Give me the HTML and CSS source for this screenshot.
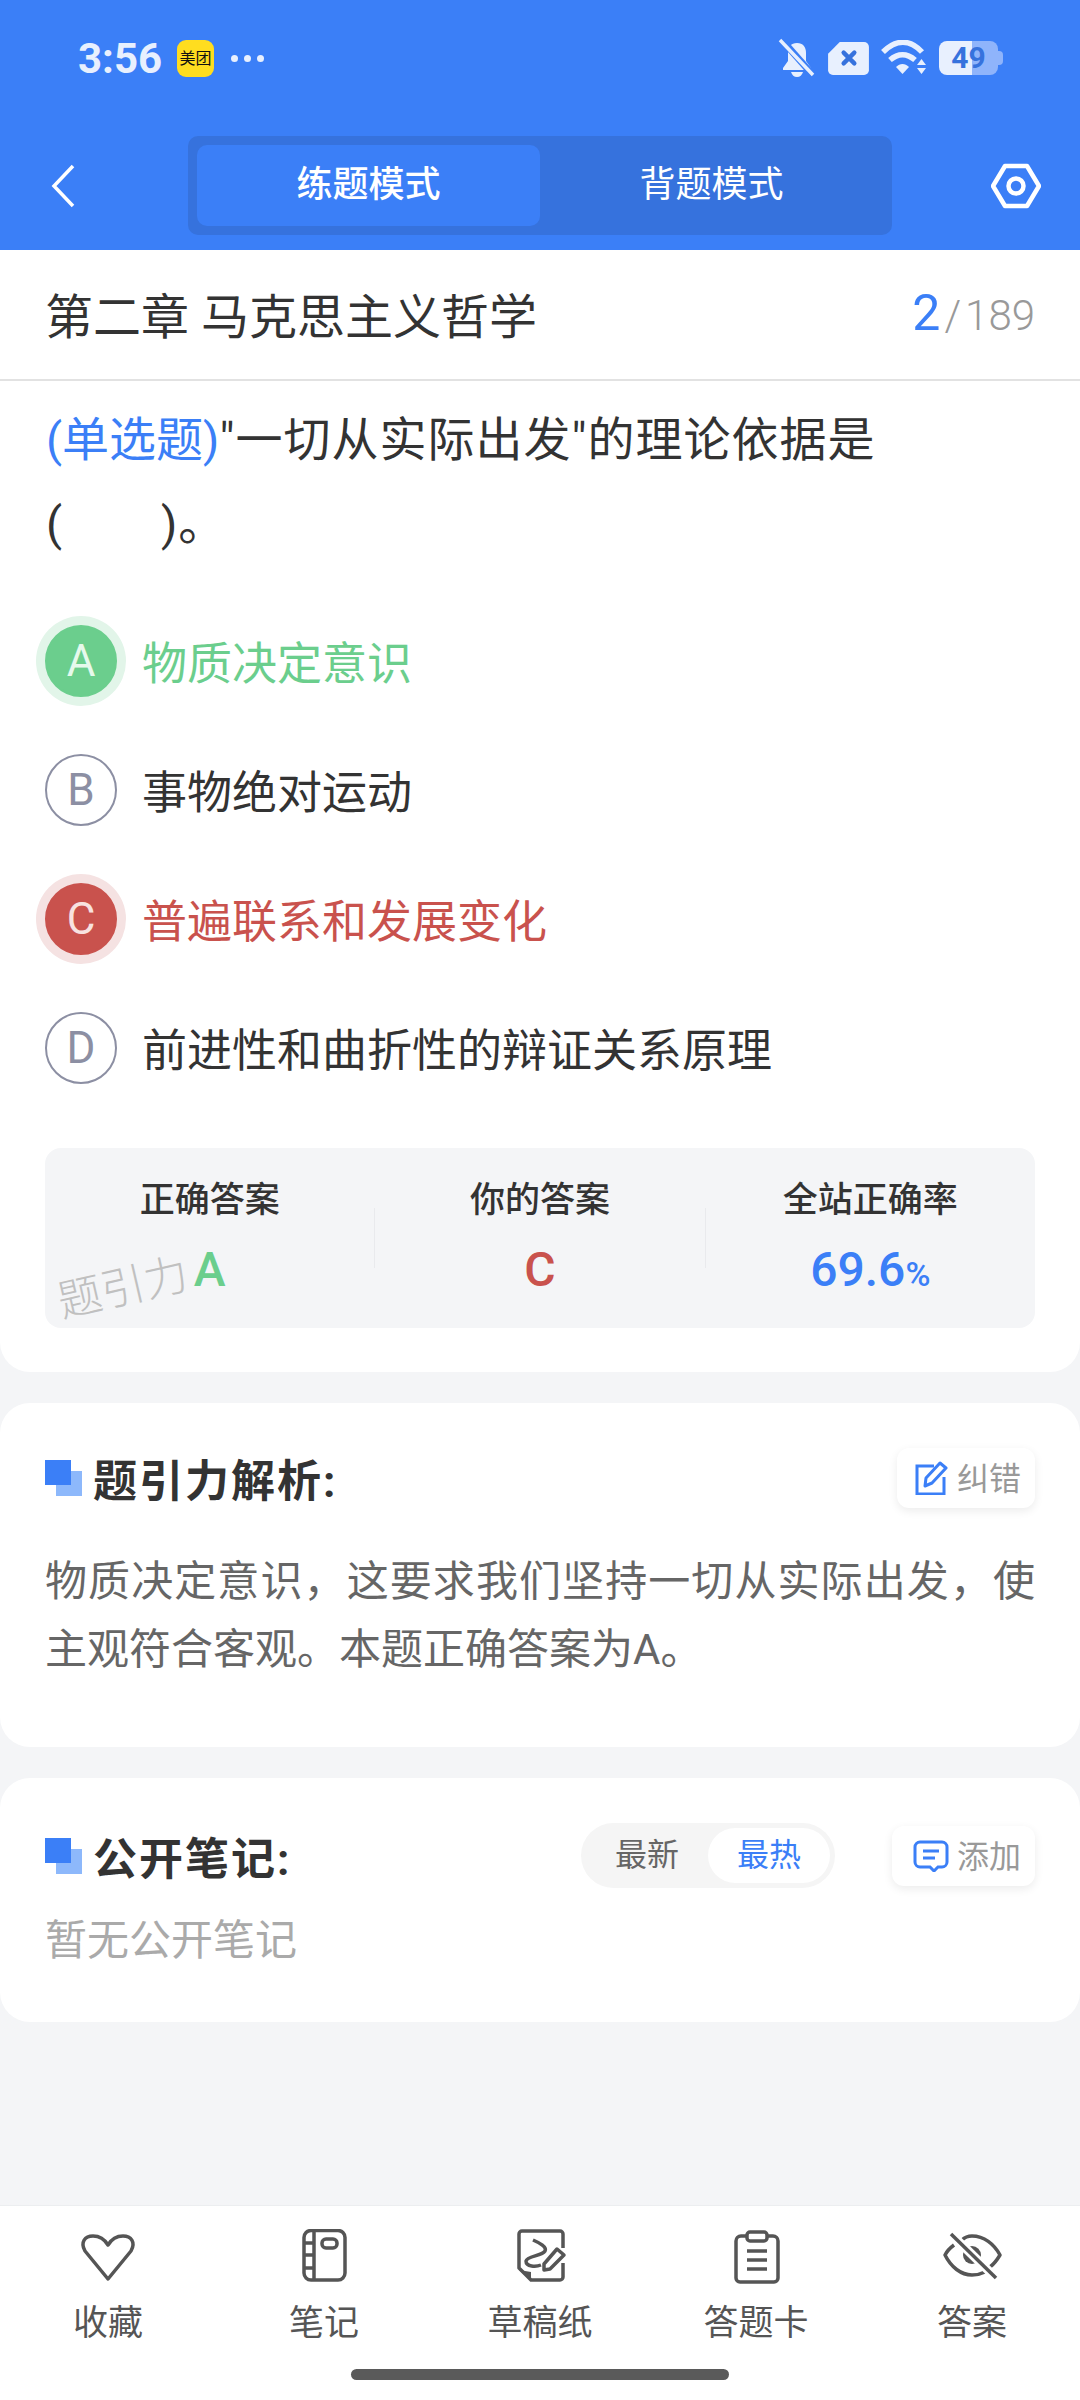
FILE: index.html
```html
<!DOCTYPE html>
<html lang="zh-CN">
<head>
  <meta charset="UTF-8">
  <title>练题模式</title>
  <link rel="stylesheet" href="styles.css">
</head>
<body>
<header class="header">
  <div class="status">
    <span class="time">3:56</span>
    <span class="app-badge">美团</span>
    <span class="more"><i></i><i></i><i></i></span>
    <span class="status-right">
      <svg width="38" height="40" viewBox="0 0 38 40">
        <path d="M19 5c-6 0-9 4-9 10v8l-5 7v2h28v-2l-5-7v-8c0-6-3-10-9-10z" fill="#e8f0fe"/>
        <path d="M13 34h12c-1 3-3 5-6 5s-5-2-6-5z" fill="#e8f0fe"/>
        <path d="M3 1l31 35" stroke="#3b7ff7" stroke-width="7"/>
        <path d="M2 2l33 35" stroke="#e8f0fe" stroke-width="3.5"/>
      </svg>
      <svg width="43" height="35" viewBox="0 0 44 36">
        <path d="M13 1h25a5 5 0 0 1 5 5v24a5 5 0 0 1-5 5H6a5 5 0 0 1-5-5V13z" fill="#e8f0fe"/>
        <path d="M17 12l11 11M28 12L17 23" stroke="#3672dd" stroke-width="4.5" stroke-linecap="round"/>
      </svg>
      <svg width="47" height="36" viewBox="0 0 47 36">
        <path d="M2 12c13-13 27-13 39 0" fill="none" stroke="#e8f0fe" stroke-width="5.5"/>
        <path d="M9 20c8-7 17-7 25 0" fill="none" stroke="#e8f0fe" stroke-width="5.5"/>
        <path d="M15 27c4-4 9-4 13 0l-6.500 7z" fill="#e8f0fe"/>
        <path d="M36 25l4.500-6 4.500 6zM36 28h9l-4.500 6z" fill="#e8f0fe"/>
      </svg>
      <span class="battery"><span class="battery-num">49</span></span>
    </span>
  </div>
  <nav class="nav">
    <div class="nav-side">
      <svg class="back" width="26" height="44" viewBox="0 0 26 44">
        <path d="M23 2L4 22l19 20" fill="none" stroke="#fff" stroke-width="3.500"/>
      </svg>
    </div>
    <div class="tabs">
      <div class="tab tab-on">练题模式</div>
      <div class="tab">背题模式</div>
    </div>
    <svg class="gear" width="50" height="46" viewBox="0 0 50 46">
      <path d="M14 3h22l12 20-12 20H14L2 23z" fill="none" stroke="#fff" stroke-width="4.500" stroke-linejoin="round"/>
      <circle cx="25" cy="23" r="7.500" fill="none" stroke="#fff" stroke-width="4.500"/>
    </svg>
  </nav>
</header>

<main class="main">
  <section class="card card-question">
    <div class="chapter">
      <span class="chapter-name">第二章 马克思主义哲学</span>
      <span class="count"><b>2</b><em>/</em>189</span>
    </div>
    <p class="question"><span class="qtype">(单选题)</span>"一切从实际出发"的理论依据是<br>(&emsp;&emsp;)。</p>
    <ul class="options">
      <li class="option right"><span class="letter">A</span>物质决定意识</li>
      <li class="option"><span class="letter">B</span>事物绝对运动</li>
      <li class="option wrong"><span class="letter">C</span>普遍联系和发展变化</li>
      <li class="option"><span class="letter">D</span>前进性和曲折性的辩证关系原理</li>
    </ul>
    <div class="stats">
      <div class="stat">
        <div class="stat-label">正确答案</div>
        <div class="stat-value green">A</div>
      </div>
      <div class="stat-sep"></div>
      <div class="stat">
        <div class="stat-label">你的答案</div>
        <div class="stat-value red">C</div>
      </div>
      <div class="stat-sep"></div>
      <div class="stat">
        <div class="stat-label">全站正确率</div>
        <div class="stat-value blue">69.6<small>%</small></div>
      </div>
      <div class="watermark">题引力</div>
    </div>
  </section>

  <section class="card card-analysis">
    <div class="card-head">
      <h2 class="title"><span class="marker"></span>题引力解析:</h2>
      <div class="mini-btn">
        <svg width="34" height="34" viewBox="0 0 34 34">
          <path d="M19 5H2v28h27V16" fill="none" stroke="#3b7ff7" stroke-width="3"/>
          <path d="M10 25l1-8L25 2l6 5-14 15z" fill="none" stroke="#3b7ff7" stroke-width="3" stroke-linejoin="round"/>
        </svg>
        <span>纠错</span>
      </div>
    </div>
    <p class="analysis">物质决定意识，这要求我们坚持一切从实际出发，使主观符合客观。本题正确答案为A。</p>
  </section>

  <section class="card card-notes">
    <div class="card-head notes-head">
      <h2 class="title"><span class="marker"></span>公开笔记:</h2>
      <div class="seg">
        <span class="seg-item">最新</span>
        <span class="seg-item seg-on">最热</span>
      </div>
      <div class="mini-btn">
        <svg width="36" height="32" viewBox="0 0 36 32">
          <path d="M7 2h22a5 5 0 0 1 5 5v15a5 5 0 0 1-5 5h-4l-4 4-4-4H7a5 5 0 0 1-5-5V7a5 5 0 0 1 5-5z" fill="none" stroke="#3b7ff7" stroke-width="3"/>
          <path d="M10 11h16M10 18h12" stroke="#3b7ff7" stroke-width="3"/>
        </svg>
        <span>添加</span>
      </div>
    </div>
    <p class="empty">暂无公开笔记</p>
  </section>
</main>

<footer class="footer">
  <div class="tools">
    <div class="tool">
      <svg width="60" height="56" viewBox="0 0 60 56"><path d="M30 50L7 22C2 13 7 7 15 7c7 0 12 4 15 9 3-5 8-9 15-9 8 0 13 6 8 15z"/></svg>
      <span>收藏</span>
    </div>
    <div class="tool">
      <svg width="60" height="56" viewBox="0 0 60 56">
        <rect x="10" y="1.500" width="41" height="49.500" rx="7"/>
        <path d="M20 1.500V51M10 14h10M10 26h10M10 39h10"/>
        <rect x="28" y="10" width="15" height="9" rx="4"/>
      </svg>
      <span>笔记</span>
    </div>
    <div class="tool">
      <svg width="60" height="56" viewBox="0 0 60 56">
        <path d="M53 19V5a3 3 0 0 0-3-3H12a3 3 0 0 0-3 3v34l12 12h29a3 3 0 0 0 3-3V34"/>
        <path class="solid" d="M9 41l12 2v8z"/>
        <path d="M23 11c7 3 14 7 12 11-3 5-18 5-19 10 0 6 10 6 15 4"/>
        <path d="M47 20l7 6-14 14-6 1v-6z"/>
      </svg>
      <span>草稿纸</span>
    </div>
    <div class="tool">
      <svg width="60" height="56" viewBox="0 0 60 56">
        <path d="M21 7h-6a5 5 0 0 0-5 5v37a4 4 0 0 0 4 4h34a4 4 0 0 0 4-4V12a5 5 0 0 0-5-5h-5"/>
        <rect x="21" y="3" width="20" height="9" rx="3"/>
        <path d="M21 22h20M21 31h20M21 40h20"/>
      </svg>
      <span>答题卡</span>
    </div>
    <div class="tool">
      <svg width="60" height="56" viewBox="0 0 60 56">
        <path d="M20 11c3-3 7-4 10-4 12 0 22 8 28 19-3 5-6 9-10 12"/>
        <path d="M12 16c-4 3-7 6-9 10 6 12 16 20 27 20 5 0 9-1 13-3"/>
        <circle class="solid" cx="30" cy="26" r="9"/>
        <path class="gap" d="M9 5l45 44"/>
        <path d="M9 5l45 44"/>
      </svg>
      <span>答案</span>
    </div>
  </div>
  <div class="home-bar"></div>
</footer>
</body>
</html>
```

FILE: styles.css
```css
* {
  box-sizing: border-box;
}
html, body {
  margin: 0;
  padding: 0;
}
body {
  width: 1080px;
  height: 2400px;
  display: flex;
  flex-direction: column;
  overflow: hidden;
  background: #f4f5f7;
  color: #333;
  font-family: Roboto, "Noto Sans CJK SC", sans-serif;
}
p, ul, h2 {
  margin: 0;
  padding: 0;
}

/* header */
.header {
  height: 250px;
  background: #3b7ff7;
  color: #fff;
}
.status {
  height: 116px;
  padding: 0 82px 0 78px;
  display: flex;
  align-items: center;
}
.time {
  width: 99px;
  font-size: 42px;
  font-weight: 700;
  color: #e8f0fe;
}
.app-badge {
  width: 37px;
  height: 37px;
  border-radius: 9px;
  background: #ffdd1f;
  color: #111;
  font-size: 16px;
  line-height: 37px;
  text-align: center;
  white-space: nowrap;
}
.more {
  display: flex;
  gap: 6px;
  margin-left: 17px;
}
.more i {
  width: 7px;
  height: 7px;
  border-radius: 50%;
  background: #e8f0fe;
}
.status-right {
  margin-left: auto;
  display: flex;
  align-items: center;
  gap: 11px;
}
.battery {
  position: relative;
  width: 59px;
  height: 34px;
  border-radius: 8px;
  background: linear-gradient(90deg, #e8f0fe 0 33px, #8fb4fb 33px);
  font-size: 30px;
  font-weight: 700;
  color: #3672dd;
  line-height: 34px;
  text-align: center;
}
.battery::after {
  content: "";
  position: absolute;
  right: -5px;
  top: 10px;
  width: 5px;
  height: 14px;
  border-radius: 0 4px 4px 0;
  background: #8fb4fb;
}
.nav {
  height: 99px;
  margin-top: 20px;
  display: flex;
  align-items: center;
}
.nav-side {
  width: 188px;
  padding-left: 50px;
  display: flex;
}
.tabs {
  width: 704px;
  height: 99px;
  padding: 9px;
  display: flex;
  background: #3672dd;
  border-radius: 10px;
}
.tab {
  flex: 1;
  font-size: 36px;
  font-weight: 500;
  line-height: 81px;
  text-align: center;
}
.tab-on {
  background: #3b7ff7;
  border-radius: 10px;
}
.tab + .tab {
  font-weight: 400;
}
.gear {
  margin-left: 99px;
}

/* cards */
.main {
  flex: 1;
}
.card {
  background: #fff;
  border-radius: 30px;
  margin-bottom: 31px;
}
.card-question {
  border-radius: 0 0 30px 30px;
  padding-bottom: 44px;
}
.chapter {
  height: 131px;
  padding: 0 45px 3px;
  border-bottom: 2px solid #e2e2e2;
  display: flex;
  align-items: center;
  justify-content: space-between;
}
.chapter-name {
  font-size: 48px;
}
.count {
  font-size: 42px;
  color: #999;
  font-weight: 300;
}
.count b {
  font-size: 50px;
  font-weight: 400;
  color: #3b7ff7;
}
.count em {
  font-style: normal;
  margin: 0 4px;
}
.question {
  padding: 17px 46px 0;
  font-size: 47px;
  line-height: 84px;
  letter-spacing: 1px;
}
.qtype {
  color: #3b7ff7;
  letter-spacing: 0;
}
.options {
  list-style: none;
  margin-top: 31px;
}
.option {
  height: 129px;
  padding-left: 45px;
  padding-bottom: 2px;
  display: flex;
  align-items: center;
  gap: 25px;
  font-size: 45px;
}
.letter {
  width: 72px;
  height: 72px;
  border: 2px solid #8c8fa3;
  border-radius: 50%;
  color: #8c8fa3;
  font-size: 44px;
  display: flex;
  align-items: center;
  justify-content: center;
}
.right {
  color: #6bce8d;
}
.right .letter {
  background: #6bce8d;
  border-color: #6bce8d;
  color: #e6f9ec;
  box-shadow: 0 0 0 9px #e2f5e9;
}
.wrong {
  color: #c9524d;
}
.wrong .letter {
  background: #c9524d;
  border-color: #c9524d;
  color: #f8e2e0;
  box-shadow: 0 0 0 9px #f5e2e2;
}
.stats {
  position: relative;
  height: 180px;
  margin: 35px 45px 0;
  padding-top: 33px;
  display: flex;
  background: #f4f5f7;
  border-radius: 16px;
}
.stat {
  flex: 1;
  text-align: center;
}
.stat-label {
  font-size: 35px;
  font-weight: 500;
  line-height: 40px;
}
.stat-value {
  margin-top: 19px;
  font-size: 48px;
  font-weight: 500;
  line-height: 60px;
}
.stat-value small {
  font-size: 34px;
}
.stat-sep {
  width: 1px;
  height: 60px;
  margin-top: 27px;
  background: #e9eaed;
}
.green {
  color: #6bce8d;
}
.red {
  color: #c9524d;
}
.blue {
  color: #3b7ff7;
}
.watermark {
  position: absolute;
  left: 12px;
  top: 113px;
  font-size: 44px;
  font-weight: 300;
  line-height: 54px;
  color: #c0c0c0;
  transform: rotate(-13deg);
}
.card-head {
  display: flex;
  align-items: center;
  justify-content: space-between;
}
.title {
  display: flex;
  align-items: center;
  font-size: 44px;
  font-weight: 700;
  letter-spacing: 2px;
  color: #333;
}
.marker {
  position: relative;
  width: 37px;
  height: 36px;
  margin-right: 11px;
}
.marker::before,
.marker::after {
  content: "";
  position: absolute;
  width: 26px;
  height: 25px;
}
.marker::before {
  right: 0;
  bottom: 0;
  background: #8db8fb;
}
.marker::after {
  left: 0;
  top: 0;
  background: #3b7ff7;
}
.mini-btn {
  height: 60px;
  padding: 0 14px 0 18px;
  display: flex;
  align-items: center;
  gap: 8px;
  background: #fff;
  border-radius: 12px;
  box-shadow: 0 3px 10px rgba(0,0,0,0.08);
  font-size: 32px;
  color: #999;
}
.mini-btn span {
  margin-top: -4px;
}
.card-analysis {
  height: 344px;
  padding: 43px 45px 0;
}
.analysis {
  margin-top: 38px;
  font-size: 42px;
  line-height: 68px;
  color: #666;
  text-align: justify;
}
.card-notes {
  height: 244px;
  padding: 45px 45px 0;
}
.notes-head {
  height: 65px;
}
.notes-head .title {
  margin-right: auto;
}
.seg {
  width: 254px;
  height: 65px;
  padding: 5px;
  margin-right: 57px;
  display: flex;
  align-items: center;
  background: #f5f5f5;
  border-radius: 33px;
  font-size: 32px;
  color: #666;
}
.seg-item {
  flex: 1;
  text-align: center;
  line-height: 55px;
}
.seg-on {
  flex: 0 0 122px;
  background: #fff;
  border-radius: 28px;
  color: #3b7ff7;
}
.notes-head .mini-btn {
  padding-left: 21px;
}
.empty {
  margin-top: 19px;
  font-size: 42px;
  line-height: 68px;
  color: #aaa;
}

/* bottom bar */
.footer {
  height: 195px;
  background: #fff;
  border-top: 1px solid #eceef0;
}
.tools {
  display: flex;
  padding-top: 23px;
}
.tool {
  flex: 1;
  display: flex;
  flex-direction: column;
  align-items: center;
  font-size: 35px;
  color: #555;
}
.tool svg {
  fill: none;
  stroke: #555;
  stroke-width: 3.5;
  stroke-linejoin: round;
}
.tool svg .solid {
  fill: #555;
  stroke: none;
}
.tool svg .gap {
  stroke: #fff;
  stroke-width: 9;
}
.tool span {
  margin-top: 16px;
  line-height: 46px;
}
.home-bar {
  width: 378px;
  height: 11px;
  margin: 22px auto 0;
  background: #5a5a5a;
  border-radius: 6px;
}
```
